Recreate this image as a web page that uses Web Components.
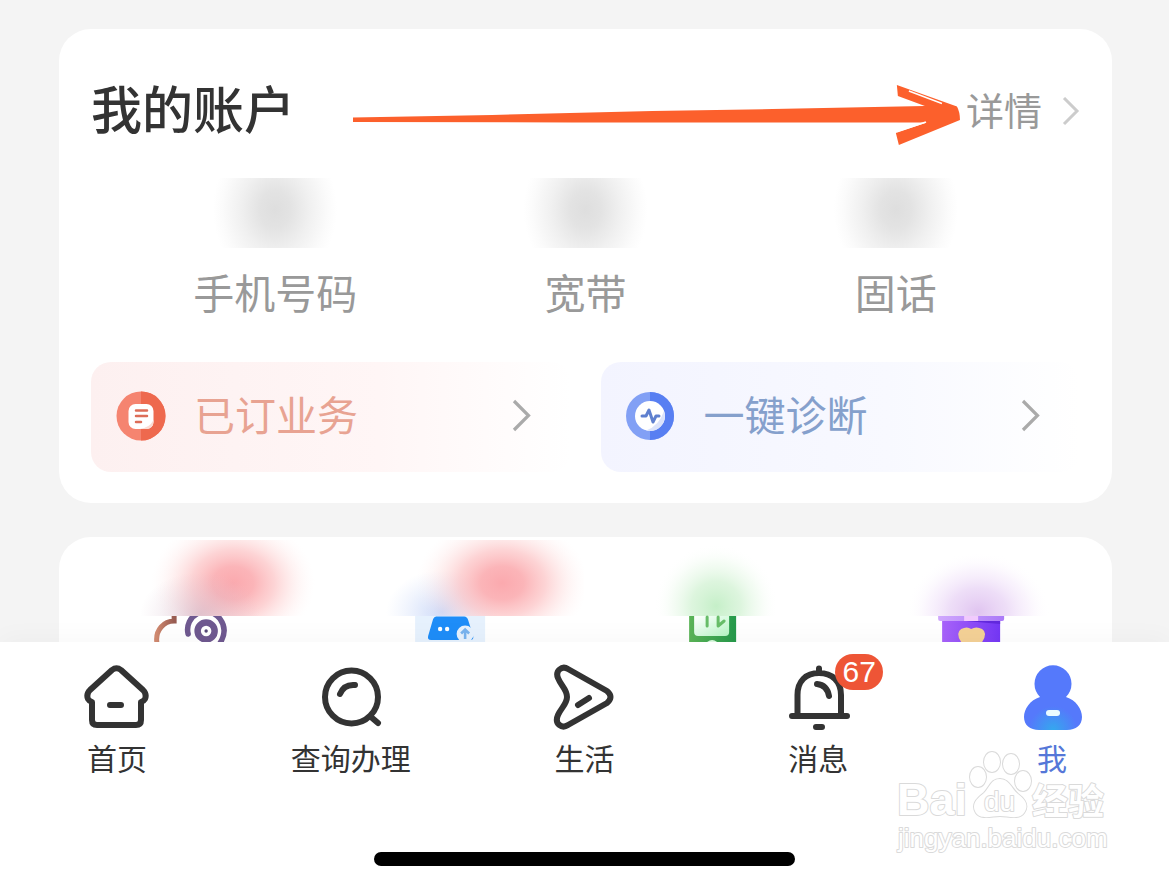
<!DOCTYPE html>
<html lang="zh-CN">
<head>
<meta charset="utf-8">
<meta name="viewport" content="width=device-width, initial-scale=1">
<title>我的账户</title>
<style>
  body { margin: 0; background: #f4f4f4; font-family: "Liberation Sans", "Noto Sans CJK SC", sans-serif; }
</style>
</head>
<body>
<account-page></account-page>

<template id="account-page">
  <style>
    :host { display: flex; flex-direction: column; height: 100vh; position: relative; overflow: hidden; color: #333; }
    main { flex: 1; min-height: 0; overflow: hidden; display: flex; flex-direction: column; gap: 34px; padding: 29px 57px 0 59px; }
    main > * { flex: none; }
    baidu-mark { position: absolute; right: 60px; bottom: 24px; }
  </style>
  <main>
    <account-card></account-card>
    <service-card></service-card>
  </main>
  <tab-bar></tab-bar>
  <baidu-mark></baidu-mark>
</template>

<template id="account-card">
  <style>
    :host { display: block; background: #fff; border-radius: 32px; padding: 51px 32px 31px; }
    header { display: flex; align-items: center; height: 64px; }
    h1 { margin: 0; font-size: 51px; line-height: 64px; font-weight: 500; color: #333; }
    hand-arrow { flex: 1; margin: 0 5px 0 57px; }
    a { display: flex; align-items: center; gap: 20px; font-size: 38px; line-height: 48px; font-weight: 400; color: #999; text-decoration: none; }
    a svg { display: block; }
    .stats { display: grid; grid-template-columns: repeat(3, 1fr); margin: 34px 29px 43px; }
    .actions { display: grid; grid-template-columns: 1fr 1fr; gap: 30px; }
  </style>
  <header>
    <h1>我的账户</h1>
    <hand-arrow></hand-arrow>
    <a href="#detail">详情
      <svg width="18" height="30" viewBox="0 0 18 30" fill="none" stroke="#ccc" stroke-width="3" aria-hidden="true"><path d="M2 1 15 14 2 27"/></svg>
    </a>
  </header>
  <div class="stats">
    <hidden-stat>手机号码</hidden-stat>
    <hidden-stat>宽带</hidden-stat>
    <hidden-stat>固话</hidden-stat>
  </div>
  <div class="actions">
    <action-button style="--tint:#fdf0f0;--mid:#fff6f6;--ink:#e8a392">
      <svg slot="icon" width="50" height="50" viewBox="0 0 50 50" aria-hidden="true">
        <circle cx="25" cy="24" r="24.500" fill="#f58470"/><path d="M25 -.5a24.500 24.500 0 0 1 0 49Z" fill="#ee694e"/>
        <rect x="12.500" y="12" width="25" height="25" rx="7" fill="#fff"/>
        <path d="M37.500 28v2a7 7 0 0 1-7 7h-7q10-1 14-9Z" fill="#fbdcd4"/>
        <path d="M20 18.500h11M20 24h11M20 30h5" stroke="#dd6d58" stroke-width="2.500" stroke-linecap="round"/>
      </svg>已订业务
    </action-button>
    <action-button style="--tint:#f3f4ff;--mid:#f8f9ff;--ink:#85a0cc">
      <svg slot="icon" width="50" height="50" viewBox="0 0 50 50" aria-hidden="true">
        <circle cx="24" cy="24" r="24" fill="#82a0f5"/><path d="M24 0a24 24 0 0 1 0 48Z" fill="#587ff2"/>
        <circle cx="24" cy="24" r="15" fill="#fff"/><path d="M38 19a15 15 0 0 1-18 19.500Q33 34 38 19Z" fill="#dbe3fb"/>
        <path d="M16 24h4l3-6 4 12 3-6h3" fill="none" stroke="#5f80cf" stroke-width="3" stroke-linecap="round" stroke-linejoin="round"/>
      </svg>一键诊断
    </action-button>
  </div>
</template>

<template id="hand-arrow">
  <style>:host { display: block; height: 64px; } svg { display: block; width: 100%; height: 64px; overflow: visible; }</style>
  <svg viewBox="0 80 608 64" preserveAspectRatio="none" aria-hidden="true">
    <path d="M1 117.500 140 115 300 111 420 109 572 106 545 96 544 85 604 106.500Q607 112 607 120L546 145 543 133 574 122.500 420 122.500 220 122.500 1 122Z" fill="#fc602c"/>
    <path d="M556 91 589 103.500 M544 131.500 573 122" stroke="#fff" stroke-width="1.500"/>
  </svg>
</template>

<template id="hidden-stat">
  <style>
    :host { display: block; text-align: center; font-size: 41px; line-height: 48px; font-weight: 400; color: #999; }
    .value { height: 70px; margin-bottom: 23px; background: radial-gradient(ellipse 62px 76px at 50% 45%, #dedede 0, #e3e3e3 25%, #f0f0f0 55%, #fbfbfb 85%, #fff 100%); }
  </style>
  <div class="value"></div>
  <slot></slot>
</template>

<template id="action-button">
  <style>
    :host { display: block; }
    button { display: flex; align-items: center; width: 100%; height: 110px; padding: 0 40px 0 25px; border: 0; border-radius: 20px; background: linear-gradient(90deg, var(--tint), var(--mid) 60%, #fff); font: 400 41px/48px "Liberation Sans", "Noto Sans CJK SC", sans-serif; color: var(--ink); text-align: left; cursor: pointer; }
    .label { flex: 1; margin-left: 28px; }
    ::slotted(svg), svg { display: block; flex: none; overflow: visible; }
  </style>
  <button type="button">
    <slot name="icon"></slot>
    <span class="label"><slot></slot></span>
    <svg width="19" height="32" viewBox="0 0 19 32" fill="none" stroke="#aaa" stroke-width="3.200" aria-hidden="true"><path d="M2 0 16.500 14.500 2 29"/></svg>
  </button>
</template>

<template id="service-card">
  <style>
    :host { display: grid; grid-template-columns: repeat(4, 1fr); background: #fff; border-radius: 32px; padding: 3px 7px 32px 5px; height: 200px; box-sizing: border-box; }
    svg { display: block; width: 100%; height: 102px; }
  </style>
  <svg viewBox="64 540 260 102" role="img" aria-label="服务一">
    <defs>
      <radialGradient id="r"><stop offset="0" stop-color="#fba9ae"/><stop offset=".25" stop-color="#fbaeb2" stop-opacity=".92"/><stop offset=".5" stop-color="#fcbcbe" stop-opacity=".65"/><stop offset=".75" stop-color="#fdd0d0" stop-opacity=".28"/><stop offset="1" stop-color="#fff0f0" stop-opacity="0"/></radialGradient>
      <radialGradient id="m"><stop offset="0" stop-color="#c5a0b5" stop-opacity=".5"/><stop offset="1" stop-color="#d8c0d0" stop-opacity="0"/></radialGradient>
      <clipPath id="c"><rect x="64" y="540" width="260" height="76"/></clipPath>
      <clipPath id="d"><rect x="64" y="616" width="260" height="26"/></clipPath>
      <linearGradient id="b" x2="1"><stop stop-color="#d18a70"/><stop offset="1" stop-color="#985c52"/></linearGradient>
    </defs>
    <g clip-path="url(#c)"><ellipse cx="233" cy="583" rx="82" ry="66" fill="url(#r)"/><ellipse cx="200" cy="614" rx="60" ry="42" fill="url(#m)"/></g>
    <g clip-path="url(#d)">
      <path d="M157 644Q155 634 161 627 166 621 174 621L174 616" fill="none" stroke="url(#b)" stroke-width="5"/>
      <path d="M188 634A18 18 0 0 1 220 619Q228 630 220 643" fill="none" stroke="#6f5990" stroke-width="5.500" stroke-linecap="round"/>
      <circle cx="206" cy="631" r="12" fill="#fff" stroke="#fff" stroke-width="5"/>
      <circle cx="206" cy="631" r="8.500" fill="#fff" stroke="#6f5990" stroke-width="6.500"/><circle cx="206" cy="631" r="1.700" fill="#554777"/>
    </g>
  </svg>
  <svg viewBox="324 540 260 102" role="img" aria-label="服务二">
    <defs>
      <radialGradient id="r2"><stop offset="0" stop-color="#fba9ae"/><stop offset=".25" stop-color="#fbaeb2" stop-opacity=".92"/><stop offset=".5" stop-color="#fcbcbe" stop-opacity=".65"/><stop offset=".75" stop-color="#fdd0d0" stop-opacity=".28"/><stop offset="1" stop-color="#fff0f0" stop-opacity="0"/></radialGradient>
      <radialGradient id="m2"><stop offset="0" stop-color="#b4c8f5" stop-opacity=".7"/><stop offset="1" stop-color="#d0ddfa" stop-opacity="0"/></radialGradient>
      <clipPath id="c2"><rect x="324" y="540" width="260" height="76"/></clipPath>
    </defs>
    <g clip-path="url(#c2)"><ellipse cx="442" cy="612" rx="56" ry="42" fill="url(#m2)"/><ellipse cx="502" cy="583" rx="86" ry="66" fill="url(#r2)"/></g>
    <rect x="415" y="616" width="70" height="26" fill="#e6f1fd"/>
    <path d="M436 616.500H464Q467 616.500 468 620L473 636Q474 640 470 640H431Q427 640 428 636L433 619Q434 616.500 436 616.500Z" fill="#1e8df8"/>
    <circle cx="440" cy="629" r="2.200" fill="#fff"/><circle cx="447" cy="629" r="2.200" fill="#fff"/>
    <circle cx="465" cy="634" r="8.500" fill="#e6f1fd"/><path d="M465 639V630M461 633.500 465 629.500 469 633.500" fill="none" stroke="#78b3ee" stroke-width="2.600"/>
  </svg>
  <svg viewBox="585 540 260 102" role="img" aria-label="服务三">
    <defs>
      <radialGradient id="g"><stop offset="0" stop-color="#c5efc8"/><stop offset=".4" stop-color="#d2f2d3" stop-opacity=".75"/><stop offset=".7" stop-color="#e2f7e2" stop-opacity=".35"/><stop offset="1" stop-color="#fff" stop-opacity="0"/></radialGradient>
      <linearGradient id="gs" x2="1"><stop stop-color="#5bb457"/><stop offset="1" stop-color="#25994b"/></linearGradient>
      <linearGradient id="gi" x2="1" y2="1"><stop stop-color="#fff"/><stop offset="1" stop-color="#b5f5c3"/></linearGradient>
      <clipPath id="c3"><rect x="585" y="540" width="260" height="76"/></clipPath>
    </defs>
    <ellipse cx="716" cy="606" rx="62" ry="62" fill="url(#g)" clip-path="url(#c3)"/>
    <rect x="689" y="616" width="47" height="26" fill="url(#gs)"/>
    <path d="M694 616H729V632Q729 636 725 636H698Q694 636 694 632Z" fill="url(#gi)"/>
    <path d="M707 617V626M718 617V626L724 621" fill="none" stroke="#67bd68" stroke-width="3" stroke-linecap="round" stroke-linejoin="round"/>
    <path d="M707 642Q712 638 717 642Z" fill="#dcfbe0"/>
  </svg>
  <svg viewBox="845 540 260 102" role="img" aria-label="服务四">
    <defs>
      <radialGradient id="p"><stop offset="0" stop-color="#e0c4f0"/><stop offset=".4" stop-color="#e8d3f5" stop-opacity=".75"/><stop offset=".7" stop-color="#f2e4fa" stop-opacity=".4"/><stop offset="1" stop-color="#fff" stop-opacity="0"/></radialGradient>
      <linearGradient id="ps" x2="1"><stop stop-color="#a863fa"/><stop offset="1" stop-color="#7437f5"/></linearGradient>
      <linearGradient id="pl" x2="1"><stop stop-color="#d0a8fd"/><stop offset="1" stop-color="#ab7af8"/></linearGradient>
      <clipPath id="c4"><rect x="845" y="540" width="260" height="76"/></clipPath>
    </defs>
    <ellipse cx="978" cy="612" rx="72" ry="60" fill="url(#p)" clip-path="url(#c4)"/>
    <rect x="942" y="620" width="58" height="22" fill="url(#ps)"/><path d="M966 621H1000V624Z" fill="#6128dc"/>
    <path d="M938 616H1004V619Q1004 621 1002 621H940Q938 621 938 619Z" fill="url(#pl)"/><rect x="964" y="616" width="14" height="5" fill="#f1cafd"/>
    <path d="M961 642Q955 633 961 629 967 626 971 629 976 626 982 629 988 633 982 642Z" fill="#f4d196"/>
  </svg>
</template>

<template id="tab-bar">
  <style>
    :host { display: flex; flex-direction: column; align-items: center; background: #fff; padding: 22px 0 11px; box-shadow: 0 -4px 24px rgba(0,0,0,.03); position: relative; }
    nav { display: grid; grid-template-columns: repeat(5, 1fr); width: 100%; }
    .home { width: 36%; height: 14px; border-radius: 7px; background: #000; margin-top: 74px; }
  </style>
  <nav>
    <tab-item label="首页">
      <svg width="68" height="68" viewBox="0 0 68 68"><path d="M29 6Q33.500 2.500 38 6L60 26Q64 30 62 35 61 37 58 38V56Q58 61 53 61H14Q9 61 9 56V38Q6 37 5 35 3 30 7 26ZM27 41H38"/></svg>
    </tab-item>
    <tab-item label="查询办理">
      <svg width="68" height="68" viewBox="0 0 68 68"><circle cx="34.500" cy="33" r="26.500"/><path d="M54 53 61 59M23 30Q27 20 38 21"/></svg>
    </tab-item>
    <tab-item label="生活">
      <svg width="68" height="68" viewBox="0 0 68 68"><path d="M8 14C5 7 12 1 18 5L57 27Q64 33 57 39L18 61C12 65 4 60 8 51 11 44 17 40 17 33 17 25 11 22 8 14ZM28 41 39 34"/></svg>
    </tab-item>
    <tab-item label="消息" badge="67">
      <svg width="68" height="68" viewBox="0 0 68 68"><path d="M13.500 52V31C13.500 17 22 9 35 9S57 17 57 31V52M8 52H63M32 63H38M35 4.500V8M33 20Q43 21 45 32"/></svg>
    </tab-item>
    <tab-item label="我" active>
      <svg width="68" height="68" viewBox="0 0 68 68">
        <defs><radialGradient id="u" gradientUnits="userSpaceOnUse" cx="35" cy="66" r="24"><stop offset="0" stop-color="#34a8ee"/><stop offset="1" stop-color="#5579fb"/></radialGradient></defs>
        <path d="M22 33A18.500 18.500 0 1 1 48 33C58 36 64 45 64 53 64 61 58 66 49 66H21C12 66 6 61 6 53 6 45 12 36 22 33Z" fill="url(#u)" stroke="none"/>
        <rect x="28" y="46" width="14" height="6" rx="3" fill="#eafcff" stroke="none"/>
      </svg>
    </tab-item>
  </nav>
  <div class="home"></div>
</template>

<template id="tab-item">
  <style>
    :host { display: block; color: #333; }
    :host([active]) { color: #5577d8; }
    a { display: flex; flex-direction: column; align-items: center; gap: 10px; color: inherit; text-decoration: none; font-size: 30px; line-height: 36px; }
    .icon { position: relative; display: block; }
    ::slotted(svg) { display: block; fill: none; stroke: currentColor; stroke-width: 6px; stroke-linecap: round; stroke-linejoin: round; }
    .badge { position: absolute; left: 51px; top: -10px; width: 48px; border-radius: 18px; background: #ee5536; color: #fff; font-size: 30px; line-height: 36px; text-align: center; }
    .badge:empty { display: none; }
  </style>
  <a href="#tab"><span class="icon"><slot></slot><span class="badge"></span></span><span class="label"></span></a>
</template>

<template id="baidu-mark">
  <style>
    :host { display: block; pointer-events: none; }
    svg { display: block; overflow: visible; }
    text, .o { fill: #fff; stroke: #dadada; stroke-width: 2px; paint-order: stroke; stroke-linejoin: round; }
    text { font-family: "Liberation Sans", "Noto Sans CJK SC", sans-serif; }
  </style>
  <svg width="212" height="103" viewBox="896 750 212 103">
    <g class="o"><ellipse cx="977" cy="777" rx="8" ry="10"/><ellipse cx="991" cy="762" rx="8" ry="10"/><ellipse cx="1010" cy="764" rx="8" ry="10"/><ellipse cx="1022" cy="781" rx="8" ry="10"/>
    <path d="M999 779C1008 779 1010 788 1017 794 1025 800 1028 806 1023 813 1018 820 1007 816 999 816S980 820 975 813C970 805 975 799 983 793 989 787 990 779 999 779Z"/></g>
    <text x="896" y="815" font-size="45" font-weight="700">Bai</text>
    <text x="983" y="811" font-size="28">du</text>
    <text x="1031" y="815" font-size="36" font-weight="700">经验</text>
    <text x="897" y="847" font-size="26">jingyan.baidu.com</text>
  </svg>
</template>

<script>
  const define = (name, setup) => customElements.define(name, class extends HTMLElement {
    constructor() {
      super();
      this.attachShadow({ mode: 'open' }).append(document.getElementById(name).content.cloneNode(true));
    }
    connectedCallback() { if (setup) setup(this); }
  });
  ['hand-arrow', 'hidden-stat', 'action-button', 'service-card', 'baidu-mark'].forEach(n => define(n));
  define('tab-item', el => {
    el.shadowRoot.querySelector('.label').textContent = el.getAttribute('label');
    el.shadowRoot.querySelector('.badge').textContent = el.getAttribute('badge') || '';
    if (el.hasAttribute('active')) el.shadowRoot.querySelector('a').setAttribute('aria-current', 'page');
  });
  define('tab-bar');
  define('account-card');
  define('account-page');
</script>
</body>
</html>
